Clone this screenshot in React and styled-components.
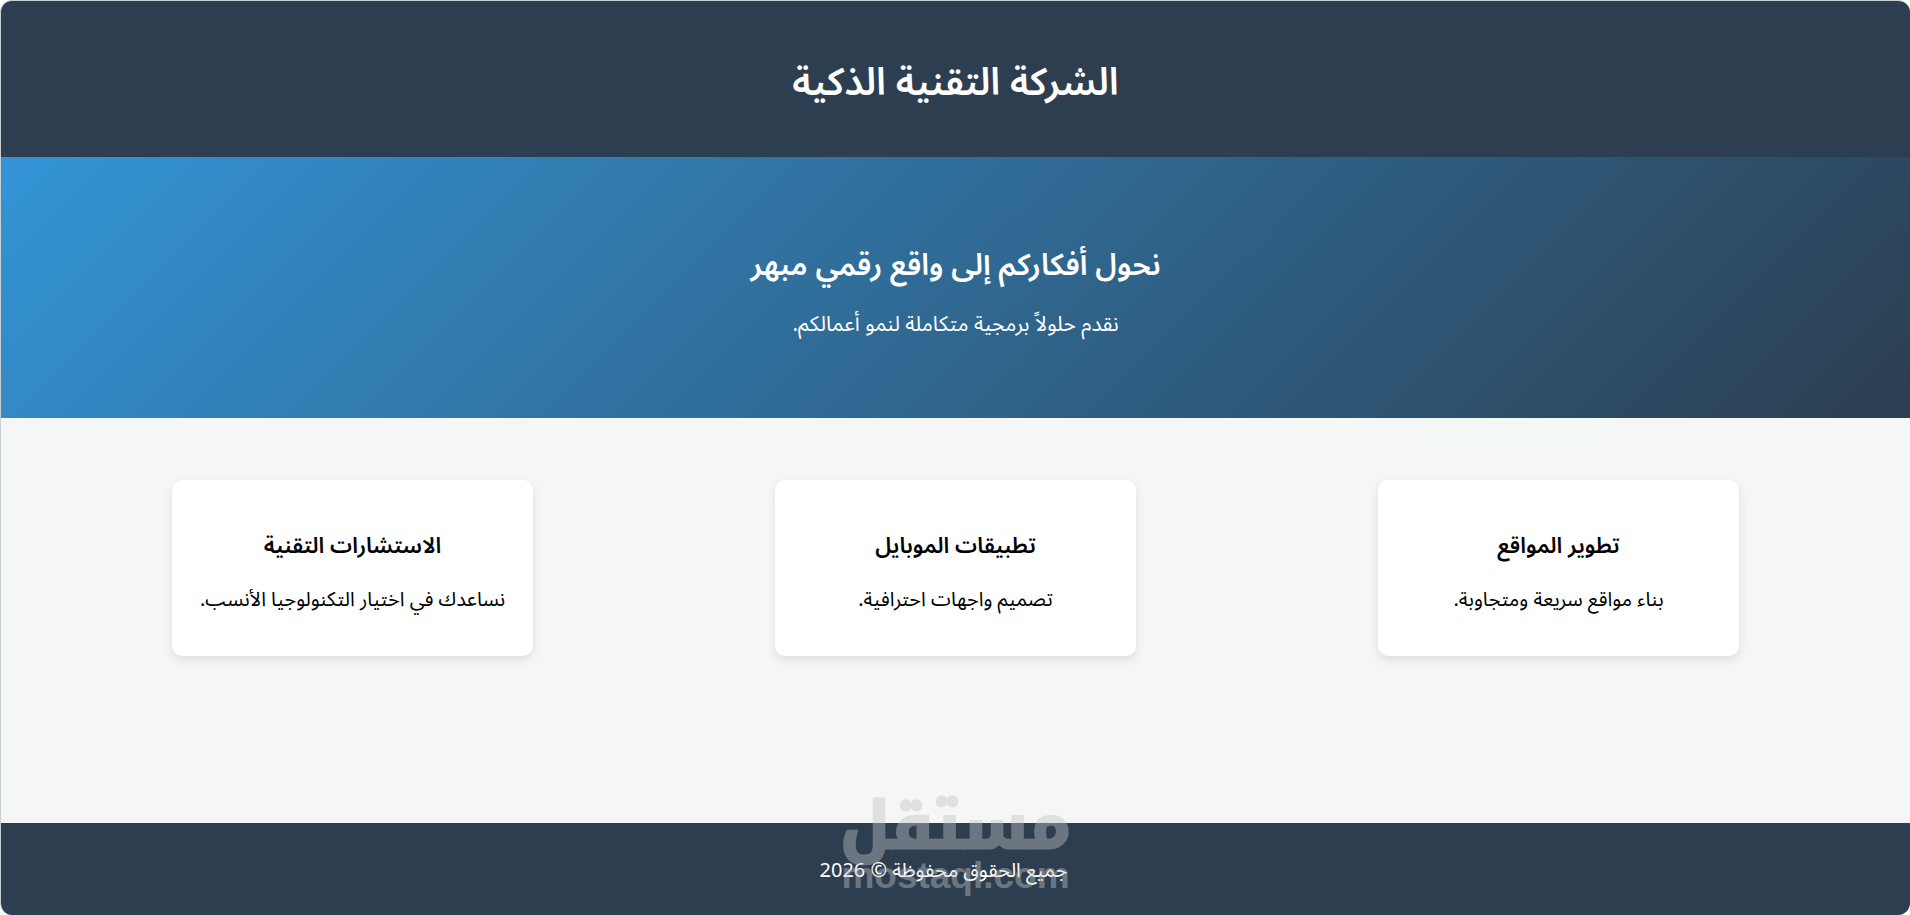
import React from 'react'
import styled, { createGlobalStyle } from 'styled-components'

const services = [
    { title: 'تطوير المواقع', text: 'بناء مواقع سريعة ومتجاوبة.' },
    { title: 'تطبيقات الموبايل', text: 'تصميم واجهات احترافية.' },
    { title: 'الاستشارات التقنية', text: 'نساعدك في اختيار التكنولوجيا الأنسب.' },
]

function Service({ service }) {
    return (
        <Card>
            <CardTitle>{service.title}</CardTitle>
            <CardText>{service.text}</CardText>
        </Card>
    )
}

function Watermark() {
    return (
        <WatermarkBox aria-hidden="true">
            <WatermarkName>مستقل</WatermarkName>
            <WatermarkDomain dir="ltr">mostaql.com</WatermarkDomain>
        </WatermarkBox>
    )
}

function App() {
    return (
        <Page dir="rtl" lang="ar">
            <GlobalStyle />
            <Header>
                <SiteTitle>الشركة التقنية الذكية</SiteTitle>
            </Header>
            <Hero>
                <HeroTitle>نحول أفكاركم إلى واقع رقمي مبهر</HeroTitle>
                <HeroText>نقدم حلولاً برمجية متكاملة لنمو أعمالكم.</HeroText>
            </Hero>
            <Services>
                { services.map((service) => <Service key={service.title} service={service} />) }
            </Services>
            <Footer>
                <Copyright>جميع الحقوق محفوظة © 2026</Copyright>
                <Watermark />
            </Footer>
        </Page>
    )
}

const GlobalStyle = createGlobalStyle`
    * {
        box-sizing: border-box;
    }

    body {
        margin: 0;
        background: #ffffff;
        color: #000000;
        font-family: 'Noto Sans Arabic', 'Noto Sans', sans-serif;
        font-size: 20px;
    }

    h1, h2, h3, p {
        margin: 0;
    }
`

const Page = styled.div`
    display: flex;
    flex-direction: column;
    min-height: 100vh;
    overflow: hidden;
    border-top: 1px solid #c9d0d3;
    border-left: 1px solid #c9d0d3;
    border-radius: 12px;
    background: #f4f7f6;
    text-align: center;
`

const Header = styled.header`
    padding: 52px 24px 44px;
    background: #2c3e50;
    color: #ffffff;
`

const SiteTitle = styled.h1`
    font-size: 38px;
    font-weight: 600;
    line-height: 60px;
`

const Hero = styled.section`
    padding: 85px 24px 78px;
    background: linear-gradient(135deg, #3394d6, #2c3e50);
    color: #ffffff;
`

const HeroTitle = styled.h2`
    font-size: 30px;
    font-weight: 600;
    line-height: 48px;
`

const HeroText = styled.p`
    margin-top: 18px;
    font-size: 21px;
    line-height: 32px;
`

const Services = styled.main`
    display: flex;
    flex: 1;
    align-items: flex-start;
    justify-content: space-around;
    padding: 62px 50px;
`

const Card = styled.article`
    width: 20%;
    padding: 48px 24px 40px;
    border-radius: 10px;
    background: #ffffff;
    box-shadow: 0 4px 10px rgba(0, 0, 0, 0.1);
`

const CardTitle = styled.h3`
    font-size: 22px;
    font-weight: 600;
    line-height: 36px;
`

const CardText = styled.p`
    margin-top: 20px;
    line-height: 32px;
    white-space: nowrap;
`

const Footer = styled.footer`
    position: relative;
    padding: 32px 24px 28px;
    background: #2c3e50;
    color: #ffffff;
`

const Copyright = styled.p`
    padding-right: 24px;
    line-height: 32px;
`

const WatermarkBox = styled.div`
    position: absolute;
    left: 50%;
    bottom: 25px;
    transform: translateX(-50%);
    color: #c4c4c4;
    opacity: 0.42;
    white-space: nowrap;
    pointer-events: none;
`

const WatermarkName = styled.div`
    font-family: 'Noto Kufi Arabic', 'Noto Sans Arabic', sans-serif;
    font-size: 64px;
    font-weight: 700;
    line-height: 70px;
    -webkit-text-stroke: 3px #c4c4c4;
`

const WatermarkDomain = styled.div`
    font-family: 'Liberation Sans', sans-serif;
    font-size: 37px;
    font-weight: 700;
    line-height: 28px;
`

export default App
